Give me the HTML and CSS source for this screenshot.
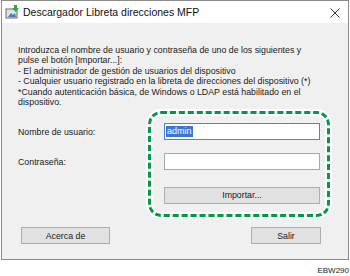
FILE: index.html
```html
<!DOCTYPE html>
<html lang="es">
<head>
  <meta charset="UTF-8" />
  <title>Descargador Libreta direcciones MFP</title>
  <link rel="stylesheet" href="styles.css">
</head>
<body>
  <div class="window">
    <div class="titlebar">
      <svg class="app-icon" width="14" height="14" viewBox="0 0 14 14">
        <rect x="1" y="4" width="11" height="9" fill="#d8e4f0" stroke="#7a6a50" stroke-width="1"/>
        <path d="M3 12 L6 8 L8 10 L10 8 L11 12 Z" fill="#4a7ab8"/>
        <path d="M9 0 L12 0 L12 3 L14 3 L10.5 7 L7 3 L9 3 Z" fill="#2fa84a"/>
      </svg>
      <span class="title">Descargador Libreta direcciones MFP</span>
      <svg class="close" width="10" height="10" viewBox="0 0 10 10">
        <path d="M0.5 0.5 L9.5 9.5 M9.5 0.5 L0.5 9.5" stroke="#333" stroke-width="1"/>
      </svg>
    </div>

    <div class="content">
      <p class="intro">
        Introduzca el nombre de usuario y contraseña de uno de los siguientes y<br>
        pulse el botón [Importar...]:<br>
        - El administrador de gestión de usuarios del dispositivo<br>
        - Cualquier usuario registrado en la libreta de direcciones del dispositivo (*)<br>
        *Cuando autenticación básica, de Windows o LDAP está habilitado en el<br>
        dispositivo.
      </p>

      <div class="form">
        <label>Nombre de usuario:</label>
        <div class="field focused"><span class="selected">admin</span></div>
        <label>Contraseña:</label>
        <div class="field"></div>
        <div class="btn import">Importar...</div>
        <div class="highlight"></div>
      </div>

      <div class="actions">
        <div class="btn about">Acerca de</div>
        <div class="btn exit">Salir</div>
      </div>
    </div>
  </div>
  <div class="code">EBW290</div>
</body>
</html>
```

FILE: styles.css
```css
* {
  box-sizing: border-box;
}

body {
  margin: 0;
  width: 350px;
  height: 276px;
  background: #fff;
  font-family: 'Liberation Sans', Arial, sans-serif;
  color: #1a1a1a;
  overflow: hidden;
}

.window {
  margin-left: 1px;
  width: 348px;
  height: 260px;
  border: 1px solid #8c8c8c;
  display: flex;
  flex-direction: column;
}

.titlebar {
  height: 22px;
  background: #fff;
  display: flex;
  align-items: center;
  padding: 0 8px 0 3px;
}

.app-icon {
  margin-right: 4px;
}

.title {
  flex: 1;
  font-size: 10.5px;
  color: #111;
}

.close {
  margin-top: 1px;
}

.content {
  flex: 1;
  background: #f0f0f0;
  padding: 22px 0 0 16px;
}

.intro {
  margin: 0;
  font-size: 8.8px;
  line-height: 10.4px;
}

.form {
  position: relative;
  margin-top: 16px;
  display: grid;
  grid-template-columns: 146px 156px;
  grid-template-rows: 17px 17px 17px;
  row-gap: 13px;
  align-items: center;
}

.form label {
  font-size: 8.8px;
}

.field {
  height: 17px;
  background: #fff;
  border: 1px solid #a8a8a8;
  padding: 2px 1px;
  font-size: 9px;
}

.field.focused {
  border-color: #3d8ad6;
}

.selected {
  display: inline-block;
  background: #3b78d4;
  color: #fff;
  padding: 0 1px;
  line-height: 11px;
}

.btn {
  height: 17px;
  background: #e1e1e1;
  border: 1px solid #adadad;
  font-size: 8.8px;
  display: flex;
  align-items: center;
  justify-content: center;
}

.import {
  grid-column: 2;
  margin-top: 7px;
}

.highlight {
  position: absolute;
  left: 130px;
  top: -12px;
  width: 182px;
  height: 106px;
  border: 3px dashed #00994a;
  border-radius: 13px;
  outline: 2px solid #fff;
  box-shadow: inset 0 0 0 2px #fff;
}

.actions {
  margin-top: 27px;
  width: 303px;
  display: flex;
  justify-content: space-between;
  padding-left: 3px;
}

.about {
  width: 89px;
}

.exit {
  width: 70px;
}

.code {
  text-align: right;
  padding-right: 1px;
  margin-top: 6px;
  font-size: 8px;
  color: #222;
}
```
